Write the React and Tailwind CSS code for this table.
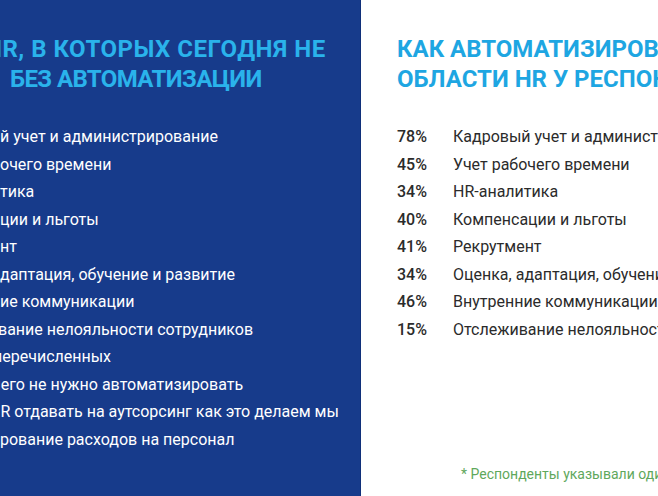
export default function App() {
  const leftItems = [
    { t: "й учет и администрирование", ml: "ml-[0px]" },
    { t: "очего времени", ml: "ml-[0px]" },
    { t: "тика", ml: "ml-[0px]" },
    { t: "ции и льготы", ml: "ml-[0px]" },
    { t: "нт", ml: "ml-[0px]" },
    { t: "даптация, обучение и развитие", ml: "ml-[0px]" },
    { t: "ие коммуникации", ml: "ml-[0px]" },
    { t: "вание нелояльности сотрудников", ml: "ml-[-2px]" },
    { t: "перечисленных", ml: "ml-[-7px]" },
    { t: "чего не нужно автоматизировать", ml: "ml-[-8px]" },
    { t: "HR отдавать на аутсорсинг как это делаем мы", ml: "ml-[-11px]" },
    { t: "рование расходов на персонал", ml: "ml-[0px]" },
  ];
  const rightItems = [
    ["78%", "Кадровый учет и администрирование"],
    ["45%", "Учет рабочего времени"],
    ["34%", "HR-аналитика"],
    ["40%", "Компенсации и льготы"],
    ["41%", "Рекрутмент"],
    ["34%", "Оценка, адаптация, обучение и развитие"],
    ["46%", "Внутренние коммуникации"],
    ["15%", "Отслеживание нелояльности сотрудников"],
  ];
  return (
    <div className="flex h-[496px] w-[658px] overflow-hidden bg-white font-['Roboto',sans-serif]">
      <div className="flex h-full w-[361px] shrink-0 flex-col overflow-hidden border-r border-[#10307a] bg-[#173b8b] pt-[34px]">
        <div className="whitespace-nowrap text-[24px] font-bold leading-[30px] text-[#2ab3eb]">
          <div className="ml-[-15px] tracking-[0.5px]">HR, В КОТОРЫХ СЕГОДНЯ НЕ</div>
          <div className="ml-[10px] tracking-[-0.6px]">БЕЗ АВТОМАТИЗАЦИИ</div>
        </div>
        <div className="mt-[29px] whitespace-nowrap text-[16px] leading-[27.5px] text-white">
          {leftItems.map((it, i) => (
            <div key={i} className={it.ml}>
              {it.t}
            </div>
          ))}
        </div>
      </div>
      <div className="flex min-w-0 flex-1 flex-col overflow-hidden pl-[36px] pt-[34px]">
        <div className="whitespace-nowrap text-[24px] font-bold leading-[30px] text-[#1ea6e2]">
          <div>КАК АВТОМАТИЗИРОВАТЬ</div>
          <div>ОБЛАСТИ HR У РЕСПОНДЕНТОВ</div>
        </div>
        <div className="mt-[29px] whitespace-nowrap text-[16px] leading-[27.5px] text-[#2b2b2b]">
          {rightItems.map(([p, t], i) => (
            <div key={i} className="flex">
              <span className="w-[56px] shrink-0 font-medium">{p}</span>
              <span>{t}</span>
            </div>
          ))}
        </div>
        <div className="mt-auto mb-[12px] ml-[64px] whitespace-nowrap text-[14px] leading-[20px] text-[#5fa85c]">
          * Респонденты указывали одинаковый
        </div>
      </div>
    </div>
  );
}
